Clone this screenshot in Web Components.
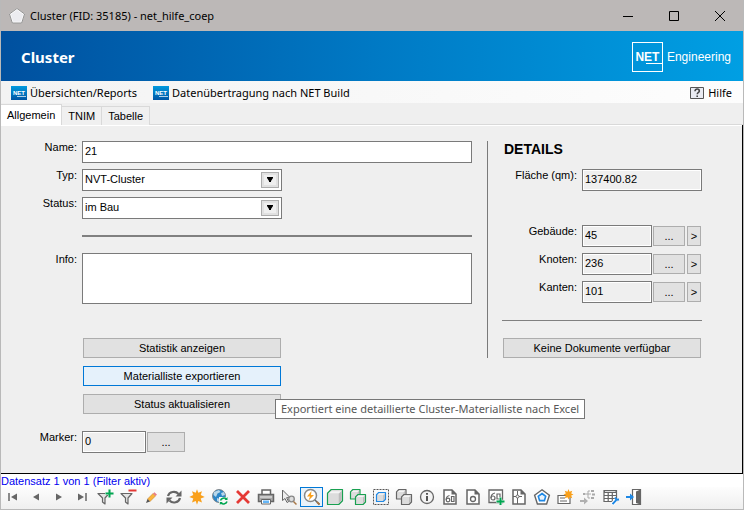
<!DOCTYPE html>
<html lang="de">
<head>
<meta charset="utf-8">
<meta name="viewport" content="width=device-width, initial-scale=1">
<title>Cluster (FID: 35185) - net_hilfe_coep</title>
<style>
  html, body { margin: 0; height: 100%; }
  body {
    --ui-font: "Noto Sans", "Open Sans", sans-serif;
    --form-font: "Liberation Sans", Arial, sans-serif;
    font: 11px/16px var(--form-font);
    color: #000;
    background: #efefef;
  }
</style>
</head>
<body>
<app-window>
  <title-bar slot="title">Cluster (FID: 35185) - net_hilfe_coep</title-bar>
  <app-banner slot="banner">Cluster</app-banner>
  <menu-bar slot="menu">
    <menu-item icon="net">Übersichten/Reports</menu-item>
    <menu-item icon="net">Datenübertragung nach NET Build</menu-item>
    <menu-item icon="help" slot="end">Hilfe</menu-item>
  </menu-bar>
  <tab-strip slot="tabs" tabs="Allgemein,TNIM,Tabelle"></tab-strip>
  <cluster-form></cluster-form>
  <record-bar slot="footer">Datensatz 1 von 1 (Filter aktiv)</record-bar>
</app-window>

<script>
const G = '#666';
const GREEN = '#00a651';
const BLUE = '#1e88e5';
const ORANGE = '#f9a01b';

const doc = `<path d="M2 1h8l4 4v10H2z" fill="#fff" stroke="${G}" stroke-width="1.500"/><path d="M9.500 0.500v5h5z" fill="${G}"/>`;
const funnel = `<path d="M1 4.500h11L8 9v6l-2.500-2V9z" fill="#e4e4e4" stroke="${G}" stroke-width="1.200" stroke-linejoin="round"/>`;
const cube = (x, y, s, stroke) => {
  const d = s / 4;
  return `<g transform="translate(${x} ${y})" stroke="${stroke}" stroke-width="1.200" stroke-linejoin="round">
    <path d="M0 ${d}L${d} 0H${s}V${s - d}L${s - d} ${s}H0z" fill="#dcdcdc"/>
    <path d="M${d} ${s * 0.12}H${s - 1}L${s - d} ${d}H1z" fill="#f4f4f4" stroke="none"/>
    <path d="M${s - d} ${d + 0.5}V${s - 1}L${s - 0.8} ${s - d - 0.5}V1.500z" fill="#bdbdbd" stroke="none"/></g>`;
};

// All drawn on a 16 x 16 grid
const ICONS = {
  pentagon: '<path d="M8 1l7 5.200-2.600 8.300H3.600L1 6.200z" fill="#ececf0" stroke="#fff" stroke-width="1.500"/><path d="M8 .5l7.500 5.500-2.800 9H3.300L.5 6z" fill="none" stroke="#777" stroke-width=".8"/>',
  net: '<defs><linearGradient id="g" x2="0" y2="1"><stop stop-color="#019ade"/><stop offset="1" stop-color="#0055a4"/></linearGradient></defs><path d="M0 1h16v14H0z" fill="url(#g)"/><text x="8" y="10" text-anchor="middle" font-family="Liberation Sans" font-weight="bold" font-size="6" fill="#fff">NET</text><path d="M6 11.500h9" stroke="#fff" stroke-width=".7"/>',
  help: '<path d="M1.500 2.500h13v11h-13z" fill="#e9ebf2" stroke="#555"/><path d="M6 6.200c0-3 4.300-2.600 4.300-.3 0 1.600-2 1.600-2 3.300M8.200 10.500v1.500" fill="none" stroke="#444" stroke-width="1.600"/>',
  first: `<path d="M4 4v8" stroke="${G}" stroke-width="1.500"/><path d="M12 4.500v7L6 8z" fill="${G}"/>`,
  prev: `<path d="M11 4.500v7L5 8z" fill="${G}"/>`,
  next: `<path d="M5 4.500v7L11 8z" fill="${G}"/>`,
  last: `<path d="M12 4v8" stroke="${G}" stroke-width="1.500"/><path d="M4 4.500v7L10 8z" fill="${G}"/>`,
  filterAdd: `${funnel}<path d="M12.500 0v9M8 4.500h9" stroke="#f4f4f4" stroke-width="3"/><path d="M12.500 .5v8M8.500 4.500h8" stroke="${GREEN}" stroke-width="2"/>`,
  filterRemove: `${funnel}<path d="M8.500 1.500h8" stroke="#e53935" stroke-width="2"/>`,
  edit: '<path d="M4.500 10L10 4.500l2.500 2.500L7 12.500z" fill="#fcb43c" stroke="#b5792c" stroke-width=".5"/><path d="M10 4.500l1.500-1.300 2.500 2.500L12.500 7z" fill="#e77d85"/><path d="M4.500 10L7 12.500l-4 1.500z" fill="#555"/>',
  refresh: `<path d="M2 7a6 5.500 0 0 1 10.500-2M14 9A6 5.500 0 0 1 3.500 11.500" fill="none" stroke="${G}" stroke-width="2.200"/><path d="M15.500 1.500v6h-6zM.5 14.500v-6h6z" fill="${G}"/>`,
  star: `<path d="M8 .3l1.300 3.500 3.700-1.600-1.300 3.900L15.700 8l-4 1.600 1.300 3.800-3.700-1.500L8 15.700l-1.300-3.800L3 13.400l1.300-3.800L.3 8l4-1.900L3 2.200l3.700 1.600z" fill="${ORANGE}"/>`,
  globe: `<circle cx="7" cy="7" r="6.500" fill="#2c86c8" stroke="#777" stroke-width=".8"/><path d="M2 3l5-2 1.500 2-3 1.500L4 8 1.500 6zM9 4l3-1 1 3-3 1zM5 9l3 1-1 3-2-1z" fill="#b8d7ea"/><path d="M7 8h9v8H7z" fill="#f7f7f7"/><path d="M8.500 11.500a3.500 3 0 0 1 6-1.500M15 12.500a3.500 3 0 0 1-6 1.500" fill="none" stroke="${GREEN}" stroke-width="1.500"/><path d="M15.500 8v3h-3zM7.800 16v-3h3z" fill="${GREEN}"/>`,
  remove: '<path d="M2 2l12 12M14 2L2 14" stroke="#e53935" stroke-width="2.800"/>',
  print: `<path d="M4 6V1h8.500v5" fill="#fff" stroke="${G}" stroke-width="1.500"/><path d="M.5 5.500h15v7H.5z" fill="#aaa" stroke="${G}" stroke-width="1.500"/><path d="M2 8h12" stroke="#eee"/><path d="M3.500 10.500h9v4.500h-9z" fill="#fff" stroke="${G}"/><path d="M5 11.500h6V14H5z" fill="#64b5f6"/>`,
  pick: `<path d="M1.500 1v10.500L4 9.500l2 4 1.600-.8-2-4 3.400-.2z" fill="#eee" stroke="${G}"/><circle cx="10.500" cy="10" r="2.800" fill="#ddd" stroke="#888" stroke-width="1.300"/><path d="M12.500 12.500l3 3" stroke="#a87848" stroke-width="1.500"/>`,
  zoom: `<circle cx="6.500" cy="6.500" r="6" fill="#fff" stroke="#888" stroke-width="1.500"/><path d="M7.500 2L3 7.500h3L4.500 11.500 10 6H7z" fill="${ORANGE}"/><path d="M11 11l4.500 4.500" stroke="#666" stroke-width="1.500"/><path d="M13 13l2.500 2.500" stroke="#a87848" stroke-width="1.800"/>`,
  cube: cube(0.5, 0.5, 15, '#18a050'),
  cubes: cube(0.5, 0.5, 9.5, '#18a050') + cube(5.5, 5.5, 10, '#18a050'),
  cubeSelect: '<path d="M.5.5h15v15H.5z" fill="none" stroke="#555" stroke-dasharray="2 1"/>' + cube(3.5, 3.5, 9, BLUE),
  cubesGrey: cube(0.5, 0.5, 9.5, G) + cube(5.5, 5.5, 10, G),
  info: `<circle cx="8" cy="8" r="6.500" fill="#f4f4f4" stroke="${G}" stroke-width="1.300"/><path d="M8 7v5M8 4v1.800" stroke="#444" stroke-width="1.800"/>`,
  report: `${doc}<circle cx="6" cy="11" r="1.800" fill="none" stroke="${G}" stroke-width="1.200"/><path d="M4.200 11C4 8 5 7 7.500 6.500M9.500 7.500h2.500v5H9.500z" fill="none" stroke="${G}" stroke-width="1.200"/>`,
  docRing: `${doc}<circle cx="8" cy="10" r="2.500" fill="none" stroke="${G}" stroke-width="1.300"/>`,
  reportAdd: `<path d="M1 1h13.500v12.500H1z" fill="#fff" stroke="${G}" stroke-width="1.300"/><circle cx="5" cy="9" r="2" fill="none" stroke="${G}" stroke-width="1.200"/><path d="M3 9c0-3 1-4.500 4-5M9 5h3v5H9z" fill="none" stroke="${G}" stroke-width="1.200"/><path d="M12.500 8v8M8 12.200h8" stroke="#f0f0f0" stroke-width="3"/><path d="M12.500 8.500v7.500M8.500 12.500h8" stroke="${GREEN}" stroke-width="2"/>`,
  docSplit: `${doc}<path d="M6.500 2v13M2 7.500h9" stroke="${G}"/><circle cx="6.500" cy="7.500" r="1.500" fill="#fff" stroke="${G}"/>`,
  pentagonBlue: `<path d="M8 .8l7.400 5.400-2.800 8.800H3.400L.6 6.200z" fill="#fff" stroke="${G}" stroke-width="1.400"/><path d="M8 4.500L11.700 7.400 10.400 11.600H5.600L4.300 7.400z" fill="#e9f3fc" stroke="${BLUE}" stroke-width="1.600"/>`,
  note: `<path d="M1 6.500h12v8H1z" fill="#fff" stroke="${G}" stroke-width="1.200"/><path d="M3 9h5M3 12h7" stroke="${G}"/><path d="M11.500 0l1 2.800 2.700-1-1 2.700 2.300 1-2.300 1 1 2.700-2.700-1-1 2.300-1-2.300-2.700 1 1-2.700-2.300-1 2.300-1-1-2.700 2.700 1z" fill="${ORANGE}"/>`,
  route: '<path d="M3 5h5M8 5V2h2M8 5v4h2M8 5h3" fill="none" stroke="#aaa"/><path d="M3 4h2v2H3zM11 1h3v2h-3zM12 4.500h3v2h-3zM11 8h3v2h-3z" fill="#aaa"/><path d="M0 11h4V8.500l4 3.500-4 3.500V13H0z" fill="#b0b0b0"/>',
  tableTool: `<path d="M1 1.500h12.500v11H1zM1 6.500h12.500M1 9.500h12.500M5.200 4v9M9.300 4v9" fill="#fff" stroke="${G}" stroke-width="1.200"/><path d="M1 1h12.500v3H1z" fill="${G}"/><path d="M2 2h10.500v1H2z" fill="#ddd"/><path d="M9 15.500l4.500-5" stroke="#fff" stroke-width="4"/><path d="M9.500 15.200l4.200-4.600M12 8.500l1.500 2.300 2.500-.3" fill="none" stroke="${BLUE}" stroke-width="2"/>`,
  exit: `<path d="M6.500 .5h8v15h-8z" fill="#fff" stroke="${G}" stroke-width="1.200"/><path d="M10 2.500L14.500 .5v15L10 14z" fill="${G}"/><path d="M0 7h4V4.500L8 8l-4 3.500V9H0z" fill="${BLUE}"/>`
};

function icon(name) {
  return `<svg width="16" height="16" viewBox="0 0 16 16" aria-hidden="true" overflow="visible">${ICONS[name] || ''}</svg>`;
}

class BaseElement extends HTMLElement {
  constructor() {
    super();
    this.attachShadow({ mode: 'open' });
  }

  connectedCallback() {
    this.shadowRoot.innerHTML = `
      <style>* { box-sizing: border-box; } :host { box-sizing: border-box; } svg { display: block; flex: none; }</style>
      ${this.render()}`;
  }

  attr(name, fallback = '') {
    return this.getAttribute(name) || fallback;
  }
}

class AppWindow extends BaseElement {
  render() {
    return `
      <style>
        :host {
          display: flex;
          flex-direction: column;
          min-height: 100vh;
          border: solid #b9b9b9;
          border-width: 0 1px 1px;
        }
        main { flex: 1; display: flex; flex-direction: column; }
      </style>
      <slot name="title"></slot>
      <slot name="banner"></slot>
      <slot name="menu"></slot>
      <slot name="tabs"></slot>
      <main><slot></slot></main>
      <slot name="footer"></slot>`;
  }
}

class TitleBar extends BaseElement {
  render() {
    return `
      <style>
        :host {
          display: flex;
          align-items: center;
          height: 31px;
          padding-left: 8px;
          background: #bcb8b7;
          font-family: var(--ui-font);
        }
        .text { flex: 1; padding-left: 5px; }
        button {
          width: 46px;
          height: 31px;
          padding: 0;
          border: 0;
          background: none;
          display: grid;
          place-items: center;
        }
        button path { fill: none; stroke: #000; }
      </style>
      ${icon('pentagon')}
      <span class="text"><slot></slot></span>
      <button aria-label="Minimieren"><svg width="10" height="10"><path d="M0 5.500h10"/></svg></button>
      <button aria-label="Maximieren"><svg width="10" height="10"><path d="M.5.5h9v9h-9z"/></svg></button>
      <button aria-label="Schließen"><svg width="10" height="10"><path d="M0 0l10 10M10 0L0 10"/></svg></button>`;
  }
}

class AppBanner extends BaseElement {
  render() {
    return `
      <style>
        :host {
          display: flex;
          align-items: center;
          justify-content: space-between;
          height: 50px;
          padding: 2px 12px 0 20px;
          color: #fff;
          background: linear-gradient(90deg, #00509f, #0079c4 50%, #009fe3);
        }
        h1 { margin: 0; font: bold 15px/24px var(--ui-font); }
        .logo { display: flex; align-items: center; gap: 4px; font-size: 12px; }
        .box {
          width: 31px;
          height: 30px;
          padding-top: 8px;
          border: 1px solid #fff;
          font: bold 12px/12px var(--form-font);
          text-align: center;
        }
        .box::after {
          content: "";
          display: block;
          height: 1px;
          margin-left: 13px;
          background: #fff;
        }
      </style>
      <h1><slot></slot></h1>
      <div class="logo"><span class="box">NET</span><span>Engineering</span></div>`;
  }
}

class MenuBar extends BaseElement {
  render() {
    return `
      <style>
        :host {
          display: flex;
          align-items: center;
          gap: 16px;
          height: 22px;
          padding: 1px 11px 0 10px;
          background: linear-gradient(90deg, #f3f3f3, #fdfdfd);
          font-family: var(--ui-font);
        }
        .end { margin-left: auto; }
      </style>
      <slot></slot>
      <div class="end"><slot name="end"></slot></div>`;
  }
}

class MenuItem extends BaseElement {
  render() {
    return `
      <style>
        :host { display: block; }
        button {
          display: flex;
          align-items: center;
          gap: 3px;
          padding: 0;
          border: 0;
          background: none;
          font: inherit;
          color: inherit;
        }
      </style>
      <button>${icon(this.attr('icon'))}<slot></slot></button>`;
  }
}

class TabStrip extends BaseElement {
  render() {
    const tabs = this.attr('tabs').split(',');
    return `
      <style>
        :host {
          display: flex;
          align-items: flex-end;
          height: 22px;
          background: #efefef;
        }
        button {
          height: 19px;
          padding: 0 6px;
          border: 1px solid #d9d9d9;
          border-width: 1px 1px 0 0;
          background: #f0f0f0;
          font: inherit;
          line-height: 16px;
        }
        button[aria-selected=true] { height: 21px; background: #fff; }
        .rest { flex: 1; border-bottom: 1px solid #d9d9d9; }
      </style>
      ${tabs.map((t, i) => `<button role="tab" aria-selected="${i === 0}">${t}</button>`).join('')}
      <span class="rest"></span>`;
  }
}

class PushButton extends BaseElement {
  render() {
    return `
      <style>
        :host { display: block; }
        button {
          display: block;
          width: 100%;
          height: 20px;
          padding: 0;
          border: 1px solid #adadad;
          background: #e1e1e1;
          font: inherit;
          line-height: 18px;
          color: #000;
        }
        :host([hot]) button { border-color: #0078d7; background: #e5f1fb; }
      </style>
      <button><slot></slot></button>`;
  }
}

const FIELD_STYLE = `
  :host { display: flex; }
  label {
    flex: none;
    width: var(--label-width, 76px);
    margin-right: 5px;
    line-height: 12px;
    text-align: right;
    white-space: nowrap;
  }
  input, textarea, select {
    flex: 1;
    min-width: 0;
    height: 22px;
    margin: 0;
    padding: 0 2px 2px;
    border: 1px solid #7a7a7a;
    border-radius: 0;
    background: #fff;
    color: #000;
    font: inherit;
    resize: none;
    appearance: none;
    outline: 0;
  }
  input:read-only { background: #efefef; box-shadow: inset 0 0 0 1px #fff; }
  textarea { height: 51px; }`;

class TextField extends BaseElement {
  render() {
    const control = this.hasAttribute('multiline')
      ? '<textarea id="field"></textarea>'
      : `<input id="field" value="${this.attr('value')}" ${this.hasAttribute('readonly') ? 'readonly' : ''}>`;
    return `
      <style>${FIELD_STYLE}</style>
      <label for="field">${this.attr('label')}:</label>
      ${control}
      <slot></slot>`;
  }
}

class SelectField extends BaseElement {
  render() {
    return `
      <style>
        ${FIELD_STYLE}
        .combo { position: relative; display: flex; flex: 0 1 200px; }
        .arrow {
          position: absolute;
          top: 3px;
          right: 3px;
          width: 18px;
          height: 16px;
          display: grid;
          place-items: center;
          border: 1px solid #adadad;
          background: #efefef;
          box-shadow: inset 0 0 0 2px #e1e1e1;
          pointer-events: none;
        }
      </style>
      <label for="field">${this.attr('label')}:</label>
      <span class="combo">
        <select id="field"><option>${this.attr('value')}</option></select>
        <span class="arrow"><svg width="6" height="6"><path d="M0 0h6v1L4 4v1H2V4L0 1z"/></svg></span>
      </span>`;
  }
}

class ClusterForm extends BaseElement {
  render() {
    const counts = [['Gebäude', 45], ['Knoten', 236], ['Kanten', 101]];
    return `
      <style>
        :host {
          flex: 1;
          display: flex;
          align-items: flex-start;
          gap: 15px;
          padding: 16px 40px 16px 0;
          background: #efefef;
          border: solid #000;
          border-width: 0 1px 1px 0;
          box-shadow: inset 0 1px #fff;
        }
        .main, aside { display: flex; flex-direction: column; gap: 6px; }
        .main { flex: 1; min-width: 0; }
        aside {
          flex: none;
          width: 215px;
          padding-left: 14px;
          border-left: 1px solid #7a7a7a;
          --label-width: 75px;
        }
        hr { width: 100%; height: 1px; margin: 11px 0; border: 0; background: #808080; }
        .main hr { width: auto; height: 2px; margin: 10px 0 10px 81px; }
        h2 { margin: 0; padding-left: 2px; font: bold 14px/16px var(--form-font); height: 22px; }
        .actions {
          position: relative;
          display: flex;
          flex-direction: column;
          gap: 8px;
          width: 198px;
          margin: 28px 0 0 82px;
        }
        .tip {
          position: absolute;
          left: 192px;
          top: 61px;
          padding: 0 5px;
          border: 1px solid #767676;
          background: #fff;
          color: #575757;
          font-family: var(--ui-font);
          line-height: 18px;
          white-space: nowrap;
        }
        .marker { width: 184px; margin-top: 11px; }
        .more { width: 38px; margin: 1px 0 0 1px; }
        aside .more { width: 32px; }
        .go { width: 14px; margin: 1px 1px 0 2px; }
        .first { margin-top: 28px; }
        .docs { margin: 0 1px; }
      </style>
      <section class="main">
        <text-field label="Name" value="21"></text-field>
        <select-field label="Typ" value="NVT-Cluster"></select-field>
        <select-field label="Status" value="im Bau"></select-field>
        <hr>
        <text-field label="Info" multiline></text-field>
        <div class="actions">
          <push-button>Statistik anzeigen</push-button>
          <push-button hot>Materialliste exportieren</push-button>
          <push-button>Status aktualisieren</push-button>
          <span class="tip" role="tooltip">Exportiert eine detaillierte Cluster-Materialliste nach Excel</span>
        </div>
        <text-field class="marker" label="Marker" value="0" readonly>
          <push-button class="more">...</push-button>
        </text-field>
      </section>
      <aside>
        <h2>DETAILS</h2>
        <text-field label="Fläche (qm)" value="137400.82" readonly></text-field>
        ${counts.map(([label, n], i) => `
          <text-field class="${i ? '' : 'first'}" label="${label}" value="${n}" readonly>
            <push-button class="more">...</push-button>
            <push-button class="go">&gt;</push-button>
          </text-field>`).join('')}
        <hr>
        <push-button class="docs">Keine Dokumente verfügbar</push-button>
      </aside>`;
  }
}

class ToolButton extends BaseElement {
  render() {
    return `
      <style>
        :host { display: block; width: 23px; height: 20px; }
        button {
          display: grid;
          place-items: center;
          width: 23px;
          height: 20px;
          padding: 0;
          border: 1px solid transparent;
          background: none;
        }
        :host([active]) button { border-color: #0078d7; background: #e8f2fa; }
      </style>
      <button aria-label="${this.attr('label')}">${icon(this.attr('icon'))}</button>`;
  }
}

const TOOLS = [
  ['first', 'Erster'], ['prev', 'Zurück'], ['next', 'Weiter'], ['last', 'Letzter'],
  ['filterAdd', 'Filter setzen'], ['filterRemove', 'Filter entfernen'], ['edit', 'Bearbeiten'],
  ['refresh', 'Aktualisieren'], ['star', 'Neu'], ['globe', 'Karte aktualisieren'],
  ['remove', 'Löschen'], ['print', 'Drucken'], ['pick', 'Auswählen'], ['zoom', 'Zoomen'],
  ['cube', 'Objekt'], ['cubes', 'Objekte'], ['cubeSelect', 'Markieren'], ['cubesGrey', 'Gruppe'],
  ['info', 'Info'], ['report', 'Bericht'], ['docRing', 'Vorlage'], ['reportAdd', 'Bericht anlegen'],
  ['docSplit', 'Plan'], ['pentagonBlue', 'Fläche'], ['note', 'Notiz'], ['route', 'Verfolgung'],
  ['tableTool', 'Tabelle anpassen'], ['exit', 'Beenden']
];

class RecordBar extends BaseElement {
  render() {
    return `
      <style>
        :host { display: block; background: #fff; }
        .status { height: 13px; line-height: 14px; color: #0000f0; }
        .tools {
          display: flex;
          flex-wrap: wrap;
          min-height: 22px;
          background: linear-gradient(#fdfdfd, #efefef);
        }
      </style>
      <div class="status"><slot></slot></div>
      <div class="tools" role="toolbar">
        ${TOOLS.map(([name, label]) => `<tool-button icon="${name}" label="${label}" ${name === 'zoom' ? 'active' : ''}></tool-button>`).join('')}
      </div>`;
  }
}

customElements.define('app-window', AppWindow);
customElements.define('title-bar', TitleBar);
customElements.define('app-banner', AppBanner);
customElements.define('menu-bar', MenuBar);
customElements.define('menu-item', MenuItem);
customElements.define('tab-strip', TabStrip);
customElements.define('push-button', PushButton);
customElements.define('text-field', TextField);
customElements.define('select-field', SelectField);
customElements.define('cluster-form', ClusterForm);
customElements.define('tool-button', ToolButton);
customElements.define('record-bar', RecordBar);
</script>
</body>
</html>
